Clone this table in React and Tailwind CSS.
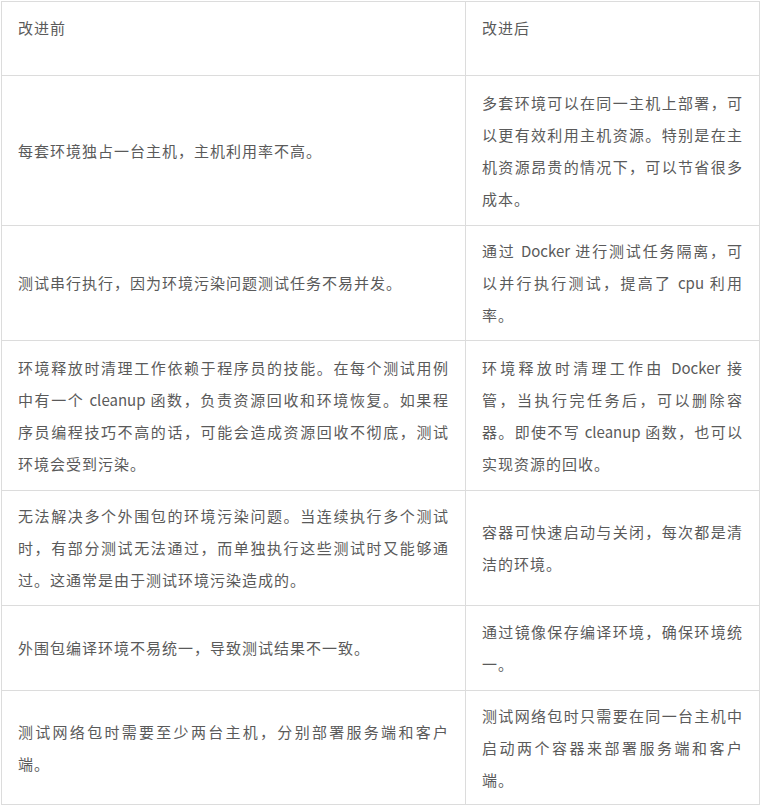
import React from 'react';

// Bảng so sánh trước / sau khi dùng Docker
const rows = [
  {
    h: 'h-[150px]',
    before: '每套环境独占一台主机，主机利用率不高。',
    after: '多套环境可以在同一主机上部署，可以更有效利用主机资源。特别是在主机资源昂贵的情况下，可以节省很多成本。',
  },
  {
    h: 'h-[115px]',
    before: '测试串行执行，因为环境污染问题测试任务不易并发。',
    after: '通过 Docker 进行测试任务隔离，可以并行执行测试，提高了 cpu 利用率。',
  },
  {
    h: 'h-[150px]',
    before:
      '环境释放时清理工作依赖于程序员的技能。在每个测试用例中有一个 cleanup 函数，负责资源回收和环境恢复。如果程序员编程技巧不高的话，可能会造成资源回收不彻底，测试环境会受到污染。',
    after: '环境释放时清理工作由 Docker 接管，当执行完任务后，可以删除容器。即使不写 cleanup 函数，也可以实现资源的回收。',
  },
  {
    h: 'h-[115px]',
    before:
      '无法解决多个外围包的环境污染问题。当连续执行多个测试时，有部分测试无法通过，而单独执行这些测试时又能够通过。这通常是由于测试环境污染造成的。',
    after: '容器可快速启动与关闭，每次都是清洁的环境。',
  },
  {
    h: 'h-[85px]',
    before: '外围包编译环境不易统一，导致测试结果不一致。',
    after: '通过镜像保存编译环境，确保环境统一。',
  },
  {
    h: 'h-[114px]',
    before: '测试网络包时需要至少两台主机，分别部署服务端和客户端。',
    after: '测试网络包时只需要在同一台主机中启动两个容器来部署服务端和客户端。',
  },
];

// Chữ Latin (Docker, cleanup, cpu) không giãn chữ
const renderText = (text) =>
  text.split(/([A-Za-z]+)/).map((part, i) =>
    /^[A-Za-z]+$/.test(part) ? (
      <span key={i} className="tracking-normal">{part}</span>
    ) : (
      part
    )
  );

const Cell = ({ children, h }) => (
  <div className={`${h} flex items-center px-4 border-r border-b border-[#dcdcdc]`}>
    <p className="w-full text-justify">{renderText(children)}</p>
  </div>
);

export default function App() {
  return (
    <div className="min-h-screen bg-white pt-px" lang="zh-CN">
      <div
        className="ml-px w-[759px] grid grid-cols-[464px_294px] border-l border-t border-[#dcdcdc] text-[15px] leading-[32px] tracking-[1px] text-[#5a5a5a]"
        style={{ fontFamily: '"Noto Sans CJK SC", "Noto Sans", sans-serif' }}
      >
        {/* Tiêu đề */}
        <div className="h-[74px] px-4 pt-2.5 border-r border-b border-[#dcdcdc]">改进前</div>
        <div className="h-[74px] px-4 pt-2.5 border-r border-b border-[#dcdcdc]">改进后</div>

        {rows.map((r, i) => (
          <React.Fragment key={i}>
            <Cell h={r.h}>{r.before}</Cell>
            <Cell h={r.h}>{r.after}</Cell>
          </React.Fragment>
        ))}
      </div>
    </div>
  );
}
